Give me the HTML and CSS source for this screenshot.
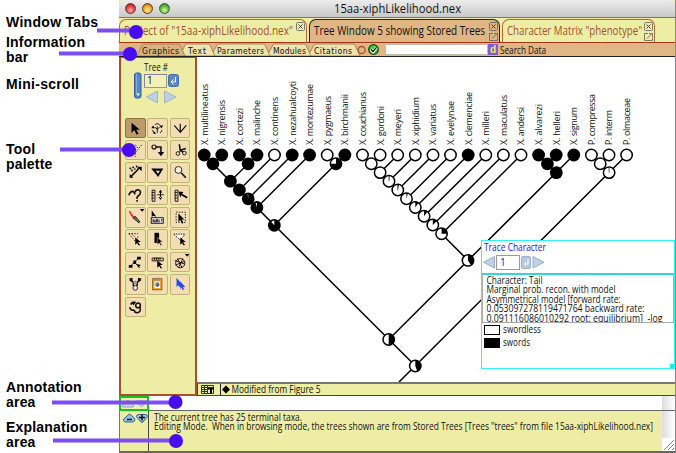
FILE: index.html
```html
<!DOCTYPE html>
<html lang="en">
<head>
<meta charset="utf-8">
<title>15aa-xiphLikelihood.nex</title>
<link rel="stylesheet" href="styles.css">
</head>
<body>
<div class="page">
<aside class="labels">
  <p class="l-tabs">Window Tabs</p>
  <p class="l-info">Information<br>bar</p>
  <p class="l-mini">Mini-scroll</p>
  <p class="l-tool">Tool<br>palette</p>
  <p class="l-anno">Annotation<br>area</p>
  <p class="l-expl">Explanation<br>area</p>
</aside>
<main class="window">
  <header class="titlebar">
    <i class="light red"></i><i class="light amber"></i><i class="light green"></i>
    <svg class="title" width="130" height="17"><text class="big" x="0" y="13" textLength="127" lengthAdjust="spacingAndGlyphs">15aa-xiphLikelihood.nex</text></svg>
  </header>
  <nav class="tabs">
    <div class="tab t1"><svg width="172" height="21"><text class="big" x="0" y="15" textLength="169" lengthAdjust="spacingAndGlyphs">Project of "15aa-xiphLikelihood.nex"</text></svg>
      <svg class="ctl" width="10" height="21"><g fill="none" stroke="#77796a"><rect x=".5" y=".5" width="8" height="8" rx="1"/><path d="M2.5 2.5l4 4m0-4l-4 4" stroke="#444"/></g></svg></div>
    <div class="tab t2"><svg width="174" height="21"><text class="big" x="0" y="15" textLength="171" lengthAdjust="spacingAndGlyphs">Tree Window 5 showing Stored Trees</text></svg>
      <svg class="ctl" width="10" height="21"><g fill="none" stroke="#7c6d5c"><rect x=".5" y=".5" width="8" height="8" rx="1"/><path d="M2.5 2.5l4 4m0-4l-4 4" stroke="#444"/><path d="M4 11.500h-3.500v7h8v-3M3 16.500l5-5M5 11.500h3.500v3.500"/></g></svg></div>
    <div class="tab t3"><svg width="137" height="21"><text class="big" x="0" y="15" textLength="135" lengthAdjust="spacingAndGlyphs">Character Matrix "phenotype"</text></svg>
      <svg class="ctl" width="10" height="21"><g fill="none" stroke="#77796a"><rect x=".5" y=".5" width="8" height="8" rx="1"/><path d="M2.5 2.5l4 4m0-4l-4 4" stroke="#444"/><path d="M4 11.500h-3.500v7h8v-3M3 16.500l5-5M5 11.500h3.500v3.500"/></g></svg></div>
  </nav>
  <div class="infobar">
    <svg class="infotabs" width="260" height="13" viewBox="119 43 260 13">
      <g stroke="#a98355" stroke-width="1" fill="#efe3b0">
        <path d="M308 56l6-11q.5-1 2-1h37q1.500 0 2 1l5 11z"/>
        <path d="M267 56l6-11q.5-1 2-1h29q1.500 0 2 1l5 11z"/>
        <path d="M211 56l6-11q.5-1 2-1h44q1.500 0 2 1l5 11z"/>
        <path d="M180 56l5-11q.5-1 2-1h21q1.500 0 2 1l5 11z"/>
        <path d="M137 56l5-11q.5-1 2-1h34q1.500 0 2 1l5 11z" fill="#dab27e"/>
      </g>
      <g class="pix">
        <text x="142" y="54" textLength="37">Graphics</text>
        <text x="188" y="54" textLength="18">Text</text>
        <text x="217" y="54" textLength="47">Parameters</text>
        <text x="273" y="54" textLength="33">Modules</text>
        <text x="314" y="54" textLength="38">Citations</text>
      </g>
      <circle cx="361.700" cy="50" r="3.500" fill="none" stroke="#b0532b" stroke-width="1.300"/>
      <circle cx="373.500" cy="49.500" r="4.800" fill="#2fd43a" stroke="#153c16" stroke-width="1.200"/>
      <path d="M370.800 49.500l2.200 2.300 3.500-4.500" fill="none" stroke="#fff" stroke-width="2.800"/>
      <path d="M371 49.500l2 2 3.500-4.200" fill="none" stroke="#111" stroke-width="1.300"/>
    </svg>
    <span class="search"></span><b class="dbtn">d</b>
    <svg width="60" height="13"><text class="ui" x="2" y="10.500" textLength="46" lengthAdjust="spacingAndGlyphs">Search Data</text></svg>
  </div>
  <div class="work">
    <section class="palette">
      <svg width="74" height="50" viewBox="121 58 74 50">
        <rect x="134.500" y="73" width="6.500" height="25" rx="2" fill="#5688c7" stroke="#335d99"/>
        <path d="M136.500 74v19" stroke="#83acdf"/><path d="M136 93.500h4l-2 2.500z" fill="#fff"/>
        <text class="ui" x="144" y="70.500" textLength="24" lengthAdjust="spacingAndGlyphs">Tree #</text>
        <rect x="144.500" y="74.500" width="22" height="13" fill="#f4f1b8" stroke="#9d9a82"/>
        <path d="M144 74.500h23M144.500 74v13" stroke="#8583a4"/>
        <text class="ui" x="147" y="84">1</text>
        <rect x="168.500" y="74.500" width="10" height="12" rx="2" fill="#5788c9" stroke="#3d6cac"/>
        <path d="M175.500 77v5h-4M173.500 79.500l-2.500 2.500 2.500 2.500" fill="none" stroke="#fff"/>
        <path d="M157.500 91v12l-11-6zM164.500 91v12l11.500-6z" fill="#bfd0e2" stroke="#9db3d0"/>
      </svg>
      <div class="tools">
        <div class="tool on"><svg viewBox="0 0 20 20"><path d="M6 4v11l3-3 2.500 5 2-1-2.500-4.500h4z" fill="#000"/></svg></div>
        <div class="tool"><svg viewBox="0 0 20 20"><path d="M10 8v7M10 11l-2.500-2m2.500 2l2.500-2M7 15q-2-1-2-3M13 15q2-1 2-3M7.500 6q2.500-2 5 0" class="s"/><path d="M3.500 10l2-3 2 3zM12 7h4.500l-2 3zM6 13l3 3H6z"/></svg></div>
        <div class="tool"><svg viewBox="0 0 20 20"><path d="M3.500 7l6.500 7.500L16.500 7M10 5v9" class="s st"/></svg></div>
        <div class="tool"><svg viewBox="0 0 20 20"><path d="M3 4l7 9 7-9M6 4l5 6M10 4l3 4M10 13v4" class="s" stroke-dasharray="1.500 1.500"/></svg></div>
        <div class="tool"><svg viewBox="0 0 20 20"><circle cx="6.500" cy="6.500" r="2.200" class="s st"/><path d="M8.500 6.500h5.500v7" class="s t"/><path d="M10.500 12h7L14 16.500z"/></svg></div>
        <div class="tool"><svg viewBox="0 0 20 20"><path d="M9 3.500l1 7M10 10l6-2M10 10l3 2" class="s t"/><circle cx="7.500" cy="13.500" r="2" class="s"/><circle cx="14.500" cy="13" r="2" class="s"/><path d="M9 12l1.500-2" class="s"/></svg></div>
        <div class="tool"><svg viewBox="0 0 20 20"><path d="M4 5l3 4m0-5l3 3m1-4l2 3" class="s t" stroke-dasharray="2 1"/><path d="M5 15l9-9" class="s t"/><path d="M12 4h5v5zM4 12l4 4H4z"/></svg></div>
        <div class="tool"><svg viewBox="0 0 20 20"><path d="M3.500 6h13L11 15z"/><path d="M8.500 8.500h4.500l-2.300 3z" fill="#f3deb2"/></svg></div>
        <div class="tool"><svg viewBox="0 0 20 20"><circle cx="8" cy="7.500" r="3.700" fill="#f9f2db" stroke="#222"/><path d="M11 10.500l5 5.500" class="s t"/></svg></div>
        <div class="tool"><svg viewBox="0 0 20 20"><path d="M3 10q2-5 5-4l2 3M10 7q0-3 3-3 4 1 2 5l-3 3v2M12 15v2" class="s t"/></svg></div>
        <div class="tool"><svg viewBox="0 0 20 20"><path d="M4.500 4.500h3v12h-3zM4 7h3m-3 3h3m-3 3h3M10 9.500h7" class="s"/><path d="M13.500 4l2 3h-4zM13.500 15l2-3h-4zM13 6h1v7h-1z"/></svg></div>
        <div class="tool"><svg viewBox="0 0 20 20"><path d="M4.500 4.500h3v12h-3zM4 7h3m-3 3h3m-3 3h3" class="s"/><path d="M8 6l5.500.5-1.500 2 6 3.500-1 1.500-6-3.500-1 2.500z"/></svg></div>
        <div class="tool"><svg viewBox="0 0 20 20"><path d="M3 3l3 1 4 6-2 2-4-6z" fill="#e32626"/><path d="M5 4l4 5" stroke="#fff"/><path d="M8 11l2-2 5 6-1 1z" fill="#777" stroke="#111"/><path d="M15 1h5l-2.500 3z"/></svg></div>
        <div class="tool"><svg viewBox="0 0 20 20"><path d="M4 2.500v7l2-1 3 1z"/><rect x="3.500" y="10.500" width="13" height="6" fill="#eee" stroke="#111"/><path d="M5.500 15.500v-3l2 3v-3M9 15.500v-3h1.500v3M12 15.500v-3M14 12.500h1.500M14 14h1.500" class="s"/></svg></div>
        <div class="tool"><svg viewBox="0 0 20 20"><rect x="5.500" y="4.500" width="10" height="11" class="s" stroke-dasharray="1.500 1.500"/><path d="M8 6v9l2-2 2 4 1.500-1-2-3.500h3z"/></svg></div>
        <div class="tool"><svg viewBox="0 0 20 20"><path d="M3 4l7 8 4-6M6 4l4 4M3 4h10" class="s" stroke-dasharray="1.500 1.500"/><path d="M10 8v8l2-2 2 3 1-1-2-3h3z"/></svg></div>
        <div class="tool"><svg viewBox="0 0 20 20"><path d="M7 3h5v11H7z"/><path d="M10 8v8l2-2 2 3 1-1-2-3h3z" stroke="#f3deb2" stroke-width=".5"/></svg></div>
        <div class="tool"><svg viewBox="0 0 20 20"><path d="M3 4.500h12L10 11z" fill="#fff" stroke="#111" stroke-dasharray="1.500 1"/><path d="M10 8v8l2-2 2 3 1-1-2-3h3z"/></svg></div>
        <div class="tool"><svg viewBox="0 0 20 20"><path d="M5 14l9-9M9 10l6 6" class="s"/><path d="M3 13h4v3H3zM8 8h3v4H8zM12 4h4v3h-4zM12 12l4 1-3 3z"/></svg></div>
        <div class="tool"><svg viewBox="0 0 20 20"><path d="M4.500 5.500h12v3h-12zM7 5v3m2-3v3m2-3v3m2-3v3" class="s"/><path d="M10 8v8l2-2 2 3 1-1-2-3h3z"/></svg></div>
        <div class="tool"><svg viewBox="0 0 20 20"><circle cx="10" cy="11" r="5" class="s"/><path d="M4 8l11 4M5 13l10-4M7 6l5 10M13 6l-5 10" class="s"/><path d="M15 1h5l-2.500 3z"/></svg></div>
        <div class="tool"><svg viewBox="0 0 20 20"><path d="M4 5l4 3v4M16 5l-4 3v4" class="s t"/><path d="M3 4l4-1v4zM17 4l-4-1v4z"/><circle cx="10" cy="8" r="2" fill="#999"/><circle cx="10" cy="14" r="2.500" fill="#eee" stroke="#222"/></svg></div>
        <div class="tool"><svg viewBox="0 0 20 20"><rect x="5" y="4" width="10" height="12" fill="#e6a92d" stroke="#8a5a12"/><path d="M7 3h6v3H7z" fill="#987"/><rect x="7" y="7" width="6" height="7" fill="#fff"/><circle cx="10" cy="10" r="2.200" fill="#2fba46"/><path d="M10 8a2.200 2.200 0 010 4.400" fill="#d02ac8"/><path d="M8 11h4l-2 2z" fill="#2637d6"/></svg></div>
        <div class="tool"><svg viewBox="0 0 20 20"><path d="M6 3v10l2-2 1 2 2-1-1-2h2zM10 7v8l1.500-1.500 1 3 1.500-1-1-2.500h2.500z" fill="#2548e8"/></svg></div>
        <div class="tool"><svg viewBox="0 0 20 20"><path d="M4 10q1 4 5 3M5 7q2-3 5-2" class="s t"/><circle cx="13" cy="8" r="2.500" class="s t"/><path d="M15 10q2 5-3 6-3 0-3-3" class="s t"/><path d="M6 4h5l-3 4z"/></svg></div>
      </div>
    </section>
    <section class="view">
      <svg class="tree" width="478" height="325" viewBox="197 57 478 325">
        <path class="branch" d="M204 155L415.500 366M221.600 155l-8.800 9M239.400 155l8.800 9M257 155l-26.600 26.300M274.300 155l-35 35M292 155l-44 44M309.500 155l-52.500 52.500M327.200 155l8.800 9M344.800 155l-70.500 70.300M362.500 155L468 260.300M380.200 155l-8.900 9M397.700 155l-17.500 17.500M415.300 155L389 181.300M433 155l-35.200 35M450.500 155L406.500 199M468.200 155L415.300 207.500M485.800 155L424 216.300M503.300 155L432.800 225M521 155L441.600 234M538.500 155l18 17.500M556.200 155l-8.900 9M573.800 155L388.700 339.500M591.400 155l17.700 17.500M609 155l-8.800 9M626.600 155L399 382"/>
        <g class="full">
          <circle cx="204.200" cy="155" r="6.400"/><circle cx="221.800" cy="155" r="6.400"/><circle cx="239.400" cy="155" r="6.400"/><circle cx="257" cy="155" r="6.400"/><circle cx="292.200" cy="155" r="6.400"/><circle cx="309.600" cy="155" r="6.400"/><circle cx="344.900" cy="155" r="6.400"/><circle cx="468.200" cy="155" r="6.400"/><circle cx="538.600" cy="155" r="6.400"/><circle cx="556.200" cy="155" r="6.400"/><circle cx="573.800" cy="155" r="6.400"/>
          <circle cx="212.900" cy="163.800" r="6.400"/><circle cx="248.100" cy="163.800" r="6.400"/><circle cx="230.400" cy="181.200" r="6.400"/><circle cx="239.400" cy="190" r="6.400"/><circle cx="248.200" cy="198.800" r="6.400"/><circle cx="256.900" cy="207.500" r="6.400"/><circle cx="274.300" cy="225.300" r="6.400"/><circle cx="547.400" cy="163.800" r="6.400"/><circle cx="556.300" cy="172.600" r="6.400"/>
        </g>
        <path d="M274.300 225.300v-4.800a4.800 4.800 0 00-3 1.500zM256.900 207.500v-4.500h-1.200zM248.200 198.800v-4.500h-.6z" fill="#fff"/>
        <g class="empty">
          <circle cx="274.500" cy="155" r="5.700"/><circle cx="327.200" cy="155" r="5.700"/><circle cx="362.500" cy="155" r="5.700"/><circle cx="380.100" cy="155" r="5.700"/><circle cx="397.700" cy="155" r="5.700"/><circle cx="415.300" cy="155" r="5.700"/><circle cx="433" cy="155" r="5.700"/><circle cx="450.500" cy="155" r="5.700"/><circle cx="485.800" cy="155" r="5.700"/><circle cx="503.400" cy="155" r="5.700"/><circle cx="521" cy="155" r="5.700"/><circle cx="591.400" cy="155" r="5.700"/><circle cx="609" cy="155" r="5.700"/><circle cx="626.600" cy="155" r="5.700"/>
          <circle cx="336" cy="163.800" r="5.700"/><circle cx="371.300" cy="163.800" r="5.700"/><circle cx="380.100" cy="172.600" r="5.700"/><circle cx="389" cy="181.200" r="5.700"/><circle cx="397.800" cy="190" r="5.700"/><circle cx="406.500" cy="198.800" r="5.700"/><circle cx="415.300" cy="207.500" r="5.700"/><circle cx="424.100" cy="216.300" r="5.700"/><circle cx="432.800" cy="225" r="5.700"/><circle cx="441.600" cy="233.800" r="5.700"/><circle cx="600.200" cy="163.800" r="5.700"/><circle cx="609.100" cy="172.600" r="5.700"/><circle cx="468" cy="260.400" r="5.700"/><circle cx="388.700" cy="339.500" r="5.700"/><circle cx="415.300" cy="366" r="5.700"/>
        </g>
        <path d="M336 163.800v-5.700a5.700 5.700 0 11-5.700 5.700zM389 181.200v-5h.5zM397.800 190v-5.200h1zM406.500 198.800v-5.700h1.500zM415.300 207.500v-5.700a5.700 5.700 0 013.200 1zM424.100 216.300v-5.700a5.700 5.700 0 013.300 1.100zM432.800 225v-5.700a5.700 5.700 0 014 1.700zM441.600 233.800v-5.700a5.700 5.700 0 015.700 5.700zM468 260.400v-5.700a5.700 5.700 0 013 10.500zM388.700 339.500v-5.700a5.700 5.700 0 010 11.400zM415.300 366v-5.700a5.700 5.700 0 012 11z"/>
        <path d="M389 181.200v-5M397.800 190v-5M609.100 172.600v-5" stroke="#222" stroke-width=".7"/>
        <g class="taxa">
          <text transform="translate(207.500 145) rotate(-90)" textLength="61">X. multilineatus</text>
          <text transform="translate(225.100 145) rotate(-90)" textLength="45">X. nigrensis</text>
          <text transform="translate(242.700 145) rotate(-90)" textLength="37">X. cortezi</text>
          <text transform="translate(260.300 145) rotate(-90)" textLength="45">X. malinche</text>
          <text transform="translate(277.900 145) rotate(-90)" textLength="48">X. continens</text>
          <text transform="translate(295.500 145) rotate(-90)" textLength="64">X. nezahualcoyti</text>
          <text transform="translate(313.100 145) rotate(-90)" textLength="61">X. montezumae</text>
          <text transform="translate(330.700 145) rotate(-90)" textLength="49">X. pygmaeus</text>
          <text transform="translate(348.300 145) rotate(-90)" textLength="51">X. birchmanii</text>
          <text transform="translate(365.900 145) rotate(-90)" textLength="53">X. couchianus</text>
          <text transform="translate(383.500 145) rotate(-90)" textLength="39">X. gordoni</text>
          <text transform="translate(401.100 145) rotate(-90)" textLength="36">X. meyeri</text>
          <text transform="translate(418.700 145) rotate(-90)" textLength="48">X. xiphidium</text>
          <text transform="translate(436.300 145) rotate(-90)" textLength="41">X. variatus</text>
          <text transform="translate(453.900 145) rotate(-90)" textLength="44">X. evelynae</text>
          <text transform="translate(471.500 145) rotate(-90)" textLength="53">X. clemenciae</text>
          <text transform="translate(489.100 145) rotate(-90)" textLength="34">X. milleri</text>
          <text transform="translate(506.700 145) rotate(-90)" textLength="50">X. maculatus</text>
          <text transform="translate(524.300 145) rotate(-90)" textLength="38">X. andersi</text>
          <text transform="translate(541.900 145) rotate(-90)" textLength="41">X. alvarezi</text>
          <text transform="translate(559.500 145) rotate(-90)" textLength="34">X. helleri</text>
          <text transform="translate(577.100 145) rotate(-90)" textLength="38">X. signum</text>
          <text transform="translate(594.700 145) rotate(-90)" textLength="51">P. compressa</text>
          <text transform="translate(612.300 145) rotate(-90)" textLength="35">P. interm</text>
          <text transform="translate(629.900 145) rotate(-90)" textLength="47">P. olmaceae</text>
        </g>
      </svg>
      <div class="trace">
        <svg width="192" height="32" viewBox="482 241 192 32">
          <text class="ui blue" x="484" y="251" textLength="62" lengthAdjust="spacingAndGlyphs">Trace Character</text>
          <path d="M494.500 256.500v11.500l-11-5.700zM533 256.500v11.500l11-5.700z" fill="#bed1e8" stroke="#98aecb"/>
          <rect x="496.500" y="255.500" width="23" height="14" fill="#fff" stroke="#999"/>
          <text class="ui blue" x="500" y="265.500">1</text>
          <rect x="521.500" y="256.500" width="9" height="12" rx="1.500" fill="#b4cae3" stroke="#9ab2ce"/>
          <path d="M528 259v5h-4m2-2l-2 2 2 2" fill="none" stroke="#fff"/>
        </svg>
        <div class="model">
          <svg width="190" height="47" viewBox="483 275 190 47">
            <text class="ui" x="486.500" y="283.500" textLength="56" lengthAdjust="spacingAndGlyphs">Character: Tail</text>
            <text class="ui" x="486.500" y="293" textLength="129" lengthAdjust="spacingAndGlyphs">Marginal prob. recon. with model</text>
            <text class="ui" x="486.500" y="302.500" textLength="134" lengthAdjust="spacingAndGlyphs">Asymmetrical model [forward rate:</text>
            <text class="ui" x="486.500" y="312" textLength="158" lengthAdjust="spacingAndGlyphs">0.053097278119471764 backward rate:</text>
            <text class="ui" x="486.500" y="321.500" textLength="176" lengthAdjust="spacingAndGlyphs">0.091116086010292 root: equilibrium]&#160; -log</text>
          </svg>
        </div>
        <div class="legend"><i class="sw"></i><svg width="60" height="13"><text class="ui" x="0" y="10" textLength="38" lengthAdjust="spacingAndGlyphs">swordless</text></svg></div>
        <div class="legend"><i class="sw dark"></i><svg width="60" height="13"><text class="ui" x="0" y="10" textLength="27" lengthAdjust="spacingAndGlyphs">swords</text></svg></div>
        <i class="grip"></i>
      </div>
    </section>
    <div class="status">
      <svg width="22" height="11"><g fill="none" stroke="#333"><path d="M3.500 1.500h12v8h-12zM3 3.500h12M3 5.500h7M3 7.500h7M6.500 1v8M9.500 1v8"/></g><path d="M10 4h6v1.500h-2V9h-2V5.500h-2z"/></svg>
      <svg class="dia" width="110" height="11"><path d="M5 1.500l4 4-4 4-4-4z"/><text class="ui" x="10.500" y="9" textLength="89" lengthAdjust="spacingAndGlyphs">Modified from Figure 5</text></svg>
    </div>
  </div>
  <div class="annotation">
    <div class="gbox"><svg width="26" height="12"><path d="M1 8l6-6 6 6-1 1H2zM15 3h11l-5.500 6z" fill="#c8dcec" stroke="#8da5c4"/></svg></div>
    <div class="scroll"></div>
  </div>
  <div class="explain">
    <div class="ebox"><svg width="26" height="14"><path d="M1.500 8.500Q1 7 3 6l3-3q1.500-1.500 3 0l3 3q1.500 1.500.5 3-.5 1-2 1h-7q-1.500 0-2-1.500zM14.500 4.500q0-2 2-2h7q2 0 2 2 0 1-1.500 2l-3 3.500q-1 1-2 0l-3-3.500q-1.500-1-1.500-2z" fill="#8fc4e8" stroke="#345f8d"/><path d="M5 7.500h5M17 5.500h6M20 2.500v6" stroke="#111" stroke-width="1.400"/></svg></div>
    <svg class="etext" width="513" height="40" viewBox="149 411 513 40">
      <text class="ui" x="154" y="420.500" textLength="148" lengthAdjust="spacingAndGlyphs">The current tree has 25 terminal taxa.</text>
      <text class="ui" x="154" y="430" textLength="499" lengthAdjust="spacingAndGlyphs">Editing Mode.&#160; When in browsing mode, the trees shown are from Stored Trees [Trees "trees" from file 15aa-xiphLikelihood.nex]</text>
    </svg>
    <div class="scroll"><svg width="13" height="13"><path d="M0 0h13v13H0z" fill="#fff"/><path d="M2 12L12 2M6 12l6-6M10 12l2-2" stroke="#888"/></svg></div>
  </div>
</main>
</div>
<svg class="callouts" width="676" height="453">
  <defs><filter id="soft" filterUnits="userSpaceOnUse" x="0" y="0" width="676" height="453"><feGaussianBlur stdDeviation=".7"/></filter></defs>
  <g class="bars"><path d="M97 30.500h37M59 53.500h70M60 149.500h70M52 402.500h120M53 440.500h120"/></g>
  <g class="dots"><circle cx="136" cy="32" r="7"/><circle cx="130" cy="54" r="7"/><circle cx="129" cy="150" r="7"/><circle cx="175.500" cy="402" r="7"/><circle cx="176" cy="441" r="7"/></g>
</svg>
</body>
</html>
```
FILE: styles.css
```css
* { box-sizing: border-box; }
html, body { margin: 0; height: 453px; overflow: hidden; background: #fff; }
body { position: relative; font: 9.5px "Open Sans", "Noto Sans", sans-serif; color: #111; }
p { margin: 0; }
svg { display: block; flex: none; }
.page { display: flex; width: 676px; height: 453px; }
.labels { width: 119px; flex: none; padding: 14px 0 0 6px; font: bold 14px/15px "Liberation Sans", sans-serif; color: #000; letter-spacing: .2px; white-space: nowrap; }
.l-tabs { height: 21px; padding-top: 1px; letter-spacing: .3px; }
.l-info { height: 42px; }
.l-mini { height: 65px; letter-spacing: .3px; }
.l-tool { height: 238px; }
.l-anno { height: 40px; }
.window { width: 557px; height: 453px; display: flex; flex-direction: column; border-right: 1px solid #888; background: #eeeda6; }
.titlebar { height: 18px; flex: none; display: flex; align-items: center; padding: 0 0 1px 6px; gap: 6px; border-radius: 5px 5px 0 0; background: linear-gradient(#ececec, #c9c9c9); border-bottom: 1px solid #777; }
.title { margin-left: 158px; }
.big { font: 12px "Open Sans", sans-serif; fill: currentColor; }
.light { width: 11px; height: 11px; border-radius: 50%; border: 1px solid #633; }
.red { background: radial-gradient(circle at 50% 70%, #ffb3ab, #e13b35 55%, #952020); }
.amber { background: radial-gradient(circle at 50% 70%, #fff08a, #efa32c 55%, #9a5a13); }
.green { background: radial-gradient(circle at 50% 70%, #d4ff9b, #5fb73b 55%, #2d6d1d); border-color: #364; }
.tabs { height: 25px; flex: none; display: flex; align-items: flex-end; gap: 2px; border-bottom: 1px solid #a33516; }
.tab { height: 23px; display: flex; justify-content: space-between; border: 1px solid #b36a3b; border-bottom: 0; border-radius: 7px 7px 0 0; color: #a4512a; padding-left: 4px; }
.ctl { margin-top: 2px; }
.t1 { width: 188px; }
.t2 { width: 191px; background: #dfb684; border-color: #222; color: #111; }
.t3 { width: 153px; }
.infobar { height: 14px; flex: none; display: flex; background: #dfb684; border-bottom: 1px solid #222; }
.pix text { font: 8.5px "DejaVu Sans Condensed", "DejaVu Sans", sans-serif; fill: #111; }
.search { width: 103px; margin-left: 6px; height: 11px; margin-top: 1px; background: #fff; border: 1px solid #bba; }
.dbtn { width: 10px; height: 11px; margin-top: 1px; background: #8259dc; color: #e7ee55; font: bold 10px/11px "Liberation Sans", sans-serif; text-align: center; }
.work { height: 339px; flex: none; display: grid; grid-template: 325px 14px / 78px 478px; }
.palette { grid-row: 1 / 3; border: 2px solid #a8502c; border-top-width: 1px; background: #eeeda6; }
.tools { display: grid; grid-template-columns: repeat(3, 20.500px); grid-auto-rows: 20.500px; gap: 1.900px; padding: 9.500px 0 0 4px; }
.tool { background: #f3deb2; border: 1px solid #c8ae7e; border-radius: 2px; }
.tool.on { background: #bd9c6a; border-color: #8f7144; }
.tool svg { width: 18.500px; height: 18.500px; }
.s { fill: none; stroke: #111; stroke-width: 1; }
.st { stroke-width: 1.300; }
.t { stroke-width: 1.700; }
.ui { font: 10px "Open Sans", sans-serif; fill: #111; }
.ui.blue { fill: #1414e6; }
.view { position: relative; background: #fff; }
.branch { fill: none; stroke: #000; stroke-width: 1.500; }
.empty { fill: #fff; stroke: #000; stroke-width: 1.500; }
.taxa text { font: 9px "Open Sans", sans-serif; fill: #111; }
.trace { position: absolute; left: 284px; top: 183px; width: 194px; height: 129px; border: 1px solid #35f0f5; background: #fff; overflow: hidden; }
.model { height: 50px; border: 1px solid #aaa; border-top: 2px solid #35d4dc; overflow: hidden; }
.legend { display: flex; height: 13px; align-items: center; gap: 3px; padding-left: 2px; }
.sw { width: 16px; height: 10px; border: 1px solid #000; background: #fff; }
.sw.dark { background: #000; }
.grip { position: absolute; right: 0; bottom: 0; width: 4px; height: 4px; background: #23e5ef; }
.status { display: flex; align-items: center; background: #eeeda6; border-top: 2px solid #777; border-bottom: 1px solid #444; border-left: 1px solid #444; }
.dia { border-left: 1px solid #222; }
.annotation { height: 15px; flex: none; display: flex; justify-content: space-between; background: #fff; border-bottom: 1px solid #666; }
.gbox { width: 30px; height: 15px; border: 2px solid #10c51c; background: #f0f0b0; }
.explain { height: 42px; flex: none; display: flex; border-bottom: 2px solid #666; }
.ebox { width: 30px; padding: 1px 0 0 2px; border-right: 1px solid #444; border-left: 1px solid #777; }
.scroll { width: 13px; display: flex; align-items: flex-end; background: linear-gradient(90deg, #ddd, #fff); }
.callouts { position: absolute; left: 0; top: 0; }
.bars { stroke: #7c4df2; stroke-width: 4; filter: url(#soft); }
.dots { fill: #4708f0; filter: url(#soft); }
```
